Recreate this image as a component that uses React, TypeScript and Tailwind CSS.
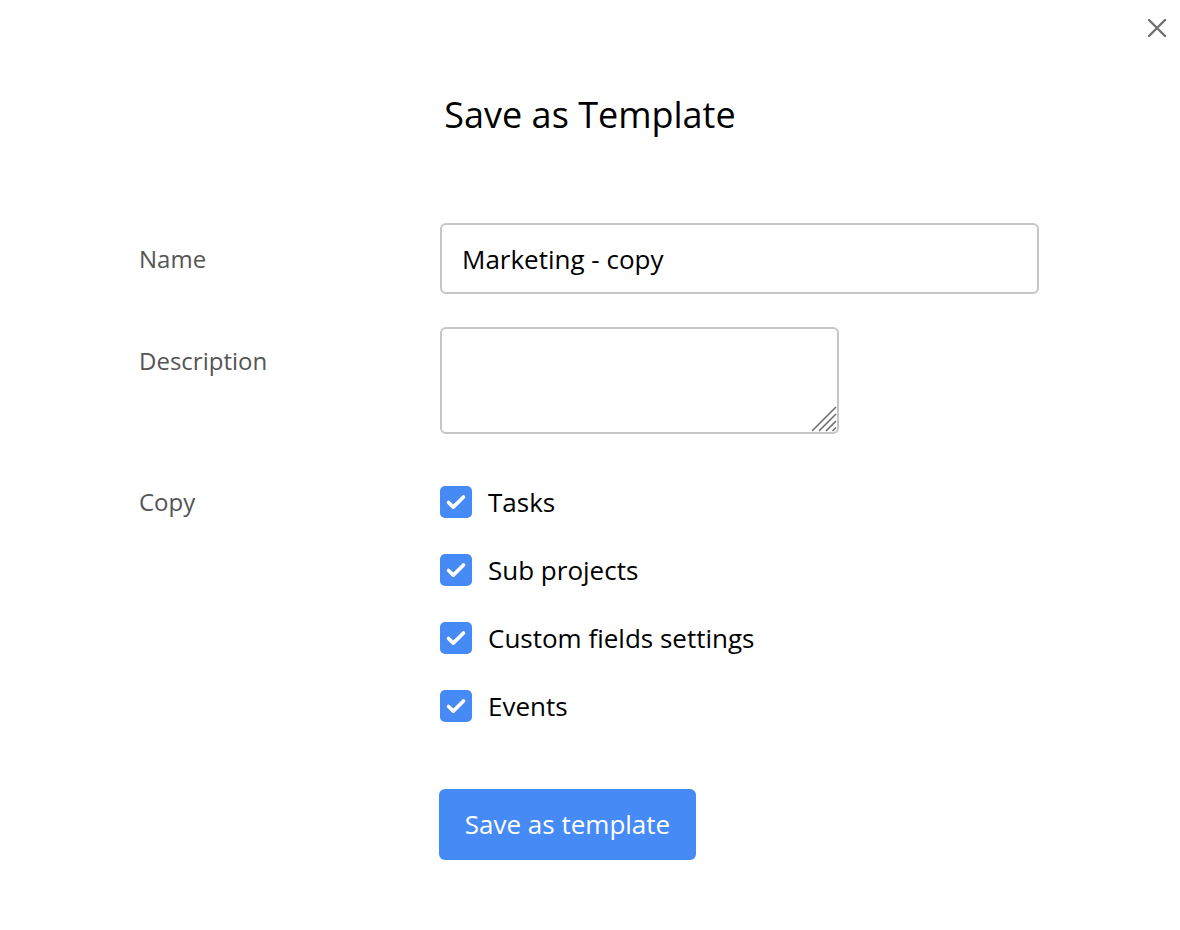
import { useState } from 'react'

const FONT = { fontFamily: '"Open Sans", "Noto Sans", sans-serif' }

const OPTIONS = ['Tasks', 'Sub projects', 'Custom fields settings', 'Events']

function CheckBox({ checked, onToggle }: { checked: boolean; onToggle: () => void }) {
  return (
    <button
      type="button"
      onClick={onToggle}
      className={`flex size-[32px] shrink-0 items-center justify-center rounded-[5px] ${checked ? 'bg-[#468af5]' : 'border-2 border-[#c4c4c4] bg-white'}`}
    >
      {checked && (
        <svg width="32" height="32" viewBox="0 0 32 32" fill="none">
          <path d="M8.5 16.5l4.8 4.6L23.5 11" stroke="white" strokeWidth="3.6" strokeLinecap="round" strokeLinejoin="round" />
        </svg>
      )}
    </button>
  )
}

export default function App() {
  const [name, setName] = useState('Marketing - copy')
  const [desc, setDesc] = useState('')
  const [checked, setChecked] = useState<Record<string, boolean>>({
    Tasks: true,
    'Sub projects': true,
    'Custom fields settings': true,
    Events: true,
  })

  return (
    <div className="relative min-h-[930px] w-full bg-white text-black" style={FONT}>
      <button type="button" className="absolute right-[9px] top-[14px] p-[4px] text-[#707070]" aria-label="Close">
        <svg width="20" height="20" viewBox="0 0 20 20" fill="none">
          <path d="M2 2l16 16M18 2L2 18" stroke="currentColor" strokeWidth="2.4" strokeLinecap="round" />
        </svg>
      </button>

      <h1 className="pt-[91px] text-center text-[36px] leading-[48px]">Save as Template</h1>

      <div className="mt-[84px] pl-[139px]">
        {/* Name */}
        <div className="flex items-center">
          <label className="w-[301px] text-[24px] text-[#555555]">Name</label>
          <input
            value={name}
            onChange={(e) => setName(e.target.value)}
            className="h-[71px] w-[599px] rounded-[6px] border-2 border-[#c6c6c6] px-[20px] text-[26px] outline-none"
          />
        </div>

        {/* Description */}
        <div className="mt-[33px] flex items-start">
          <label className="w-[301px] pt-[16px] text-[24px] text-[#555555]">Description</label>
          <div className="relative">
            <textarea
              value={desc}
              onChange={(e) => setDesc(e.target.value)}
              className="block h-[107px] w-[399px] resize-none rounded-[6px] border-2 border-[#c6c6c6] px-[20px] py-[12px] text-[26px] outline-none"
            />
            <svg className="pointer-events-none absolute bottom-[2px] right-[2px]" width="28" height="28" viewBox="0 0 28 28" fill="none">
              <path d="M3 27L27 3M10 27L27 10M17 27L27 17M23.5 27L27 23.5" stroke="#6e6e6e" strokeWidth="1.6" />
            </svg>
          </div>
        </div>

        {/* Copy */}
        <div className="mt-[52px] flex items-start">
          <label className="w-[301px] text-[24px] leading-[32px] text-[#555555]">Copy</label>
          <div className="flex flex-col gap-[36px]">
            {OPTIONS.map((o) => (
              <div key={o} className="flex items-center gap-[16px]">
                <CheckBox checked={checked[o]} onToggle={() => setChecked((c) => ({ ...c, [o]: !c[o] }))} />
                <span className="text-[26px] leading-[32px]">{o}</span>
              </div>
            ))}
          </div>
        </div>

        <div className="mt-[67px] pl-[300px]">
          <button
            type="button"
            className="h-[71px] w-[257px] rounded-[6px] bg-[#468af5] text-[26px] text-white"
          >
            Save as template
          </button>
        </div>
      </div>
    </div>
  )
}
